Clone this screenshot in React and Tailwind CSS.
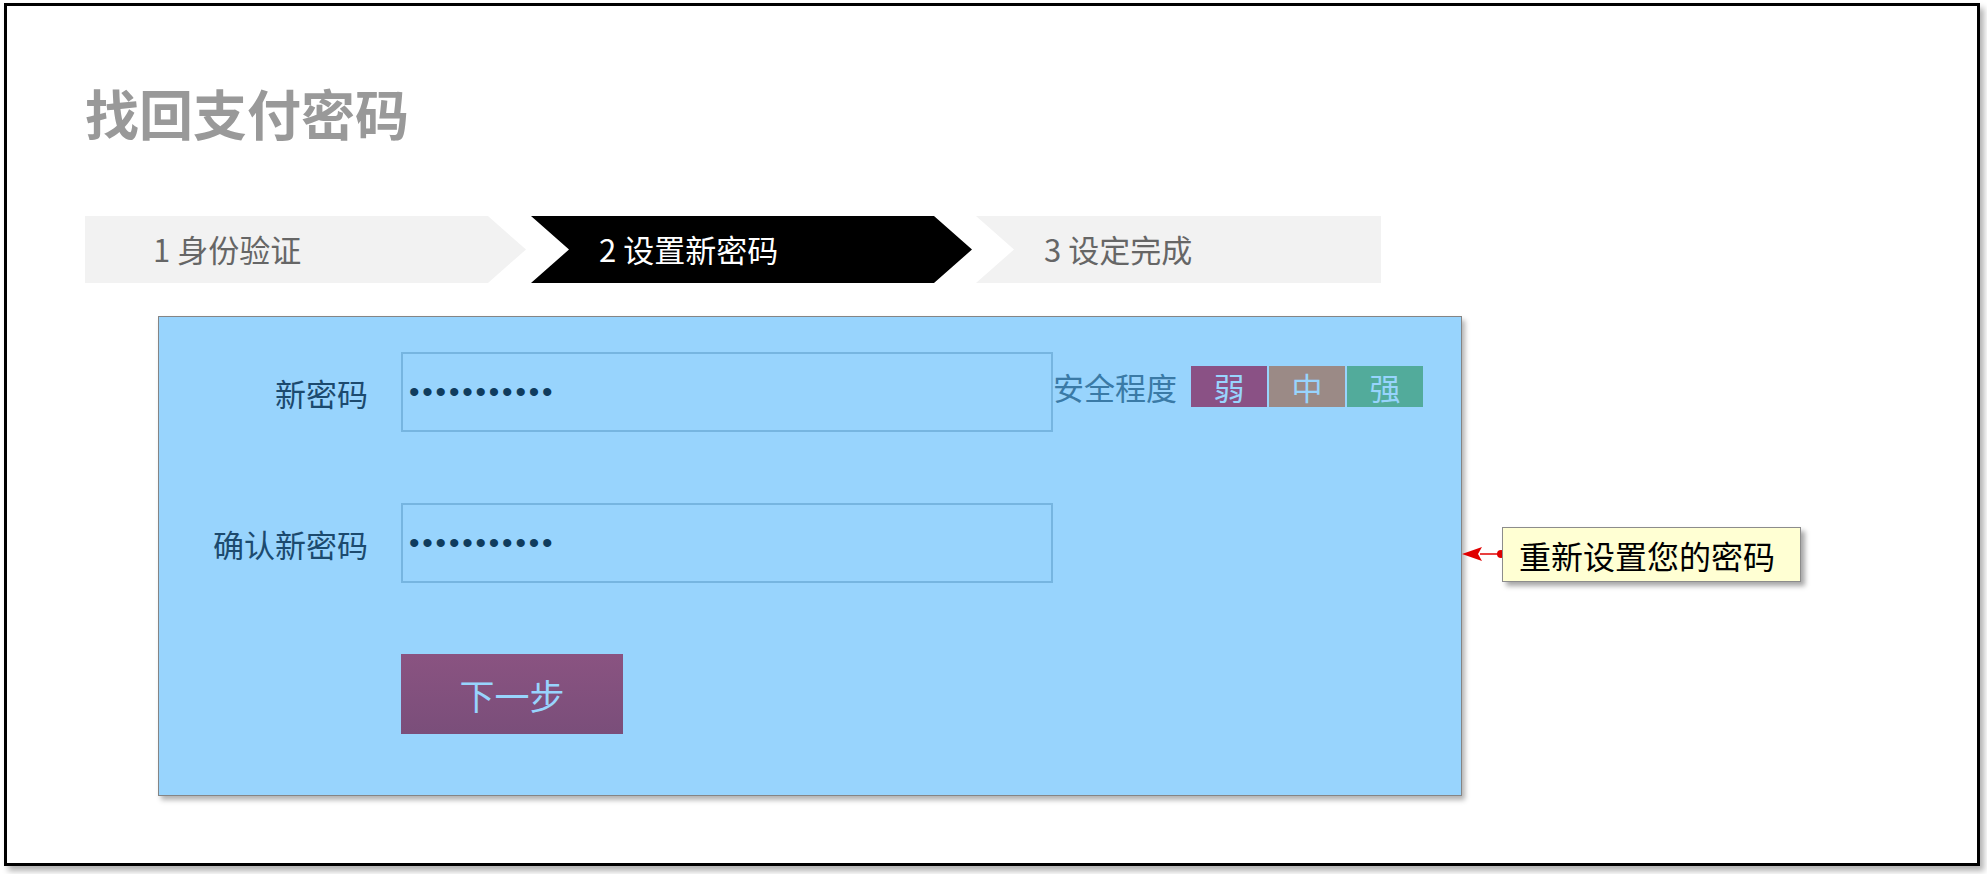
const STEPS = [
  {
    key: 1,
    label: '1 身份验证',
    className: 'w-[441px] bg-[#f2f2f2] text-[#666666] [clip-path:polygon(0_0,403px_0,441px_50%,403px_100%,0_100%)]',
  },
  {
    key: 2,
    label: '2 设置新密码',
    className: 'w-[441px] ml-[5px] bg-black text-white [clip-path:polygon(0_0,403px_0,441px_50%,403px_100%,0_100%,38px_50%)]',
  },
  {
    key: 3,
    label: '3 设定完成',
    className: 'w-[405px] ml-[4px] bg-[#f2f2f2] text-[#666666] [clip-path:polygon(0_0,100%_0,100%_100%,0_100%,38px_50%)]',
  },
]

const LEVELS = [
  { label: '弱', bg: 'bg-[#8a5185]' },
  { label: '中', bg: 'bg-[#9b8a86]' },
  { label: '强', bg: 'bg-[#52ab9b]' },
]

function PasswordField({ label, children }) {
  return (
    <div className="flex items-center">
      <div className="w-[209px] text-right text-[31px] leading-none text-[#1c4a6e]">{label}</div>
      <div className="ml-[33px] w-[652px] h-[80px] border-2 border-[#76b5e0] flex items-center pl-[6px]">
        <span className="font-['Liberation_Sans',sans-serif] text-[30px] leading-none tracking-[2.8px] text-[#0f3c5e]">
          •••••••••••
        </span>
      </div>
      {children}
    </div>
  )
}

function Callout() {
  return (
    <div className="flex items-start mt-[211px]">
      <svg width="40" height="14" viewBox="0 0 40 14" className="mt-[20px] overflow-visible">
        <line x1="18" y1="7" x2="39" y2="7" stroke="#e00000" strokeWidth="1.5" />
        <path d="M0 7 L20 0 L16 7 L20 14 Z" fill="#e00000" />
        <circle cx="39" cy="7" r="4" fill="#e00000" />
      </svg>
      <div className="w-[299px] h-[55px] bg-[#ffffd3] border border-[#8c8c8c] shadow-[4px_4px_5px_rgba(0,0,0,0.35)] flex items-center pl-[16px]">
        <span className="text-[32px] leading-none text-black">重新设置您的密码</span>
      </div>
    </div>
  )
}

export default function App() {
  return (
    <div className="w-[1987px] h-[874px] bg-white font-['Noto_Sans_CJK_SC',sans-serif] pt-[3px] pl-[4px]">
      <div className="w-[1976px] h-[863px] border-[3px] border-black shadow-[4px_5px_6px_rgba(0,0,0,0.3)] bg-white pl-[78px] pt-[80px]">
        {/* title */}
        <h1 className="text-[54px] leading-none font-bold text-[#999999]">找回支付密码</h1>

        {/* steps */}
        <div className="flex mt-[76px] h-[67px]">
          {STEPS.map(step => (
            <div key={step.key} className={`h-full flex items-center text-[31px] pl-[68px] ${step.className}`}>
              {step.label}
            </div>
          ))}
        </div>

        {/* form + callout */}
        <div className="flex mt-[33px] ml-[73px]">
          <div className="w-[1304px] h-[480px] bg-[#98d4fd] border border-[#858585] shadow-[3px_4px_5px_rgba(0,0,0,0.3)] pt-[35px]">
            <PasswordField label="新密码">
              <div className="flex items-center self-start mt-[14px]">
                <span className="text-[31px] leading-none text-[#3a7aa6]">安全程度</span>
                <div className="flex ml-[14px] gap-[2px]">
                  {LEVELS.map(l => (
                    <div key={l.label} className={`w-[76px] h-[41px] ${l.bg} flex items-center justify-center text-[31px] leading-none text-[#98d4fd]`}>
                      {l.label}
                    </div>
                  ))}
                </div>
              </div>
            </PasswordField>

            <div className="mt-[71px]">
              <PasswordField label="确认新密码" />
            </div>

            <div className="mt-[71px] ml-[242px]">
              <button className="w-[222px] h-[80px] bg-gradient-to-b from-[#8a5381] to-[#7a4e7a] text-[#98d4fd] text-[35px] leading-none">
                下一步
              </button>
            </div>
          </div>
          <Callout />
        </div>
      </div>
    </div>
  )
}
